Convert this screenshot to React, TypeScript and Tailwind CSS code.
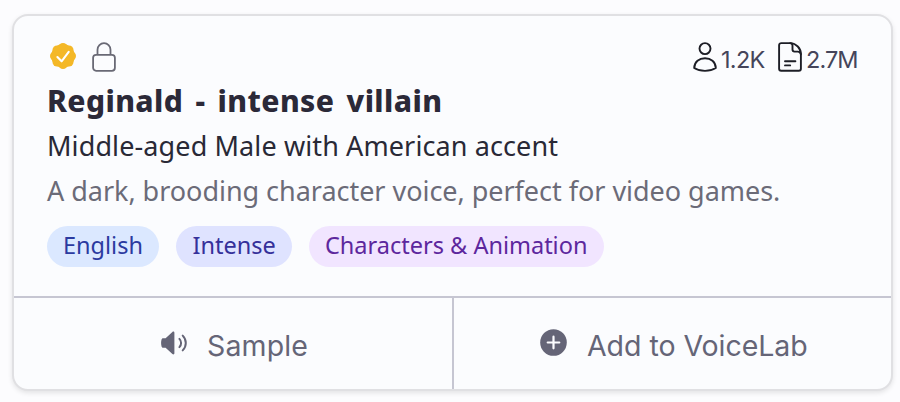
import React from "react";

function VerifiedIcon() {
  return (
    <svg className="h-[28px] w-[28px] shrink-0" viewBox="0 0 28 28" fill="none">
      <g fill="#f4b827">
        <circle cx="14" cy="14" r="11.8" />
        <circle cx="14" cy="5.6" r="4.6" />
        <circle cx="19.9" cy="8.1" r="4.6" />
        <circle cx="22.4" cy="14" r="4.6" />
        <circle cx="19.9" cy="19.9" r="4.6" />
        <circle cx="14" cy="22.4" r="4.6" />
        <circle cx="8.1" cy="19.9" r="4.6" />
        <circle cx="5.6" cy="14" r="4.6" />
        <circle cx="8.1" cy="8.1" r="4.6" />
      </g>
      <path d="M8.4 15.1 12.6 19.3 19.7 9.9" stroke="#fff" strokeWidth="2.1" strokeLinecap="round" strokeLinejoin="round" />
    </svg>
  );
}

function LockIcon() {
  return (
    <svg className="h-[30px] w-[24px] shrink-0" viewBox="0 0 24 30" fill="none" stroke="#696975" strokeWidth="1.8">
      <path d="M5.5 12.8V7.7a6.5 6.5 0 0 1 13 0v5.1" />
      <rect x="1.1" y="12.8" width="21.8" height="16" rx="3" />
    </svg>
  );
}

function UserIcon() {
  return (
    <svg className="h-[30px] w-[24px] shrink-0" viewBox="0 0 24 30" fill="none" stroke="#1d1e26" strokeWidth="1.9" strokeLinejoin="round">
      <circle cx="12" cy="6.6" r="5.5" />
      <path d="M1.2 26C1.4 19.8 6.2 16.2 12 16.2S22.6 19.8 22.8 26C19.6 28.1 16 28.9 12 28.9S4.4 28.1 1.2 26Z" />
    </svg>
  );
}

function DocumentIcon() {
  return (
    <svg className="h-[30px] w-[24px] shrink-0" viewBox="0 0 24 30" fill="none" stroke="#1d1e26" strokeWidth="1.9" strokeLinecap="round" strokeLinejoin="round">
      <path d="M12.2 1.1H3.2A2.1 2.1 0 0 0 1.1 3.2v23.5a2.1 2.1 0 0 0 2.1 2.1h17.6a2.1 2.1 0 0 0 2.1-2.1V12.2A11.1 11.1 0 0 0 12.2 1.1Z" />
      <path d="M12.2 1.1a2.5 2.5 0 0 1 2.3 2.5v4a2 2 0 0 0 2 2h3.2a3.2 3.2 0 0 1 3.2 2.6" />
      <path d="M7 19.2h10.4M7 23.4h5.2" />
    </svg>
  );
}

function SpeakerIcon() {
  return (
    <svg className="mt-[32px] h-[26px] w-[28px] shrink-0" viewBox="0 0 28 26" fill="none">
      <path d="M0.5 9.8C.8 8.7 1.4 8.3 2.4 8.3H4.6L11.4 2c.9-.8 2-.3 2 .8v20.4c0 1.1-1.1 1.6-2 .8L4.6 17.7H2.4c-1 0-1.6-.4-1.9-1.5a13 13 0 0 1 0-6.4Z" fill="#656577" />
      <path d="M18.4 8.9a5.8 5.8 0 0 1 0 8.2M21.7 5.6a10.4 10.4 0 0 1 0 14.8" stroke="#656577" strokeWidth="2" strokeLinecap="round" />
    </svg>
  );
}

function PlusIcon() {
  return (
    <svg className="mt-[31px] h-[27px] w-[27px] shrink-0" viewBox="0 0 27 27" fill="none">
      <circle cx="13.5" cy="13.5" r="13.3" fill="#656577" />
      <path d="M13.5 7.7v11.6M7.7 13.5h11.6" stroke="#fcfcff" strokeWidth="2.2" strokeLinecap="round" />
    </svg>
  );
}

export default function App() {
  return (
    <main className="h-[402px] w-[900px] overflow-hidden bg-[#fcfcfe] pl-[12px] pt-[14px] font-['Noto_Sans',sans-serif]">
      <article className="flex h-[377px] w-[881px] flex-col overflow-hidden rounded-[16px] border-2 border-[#e0e0e3] bg-[#fbfcfe] shadow-[0_2px_5px_rgba(0,0,0,0.1)]">
        <div className="flex h-[280px] shrink-0 flex-col px-[33px] pt-[26px]">
          <header className="flex h-[30px] justify-between">
            <div className="flex gap-[15px] pl-[2px]">
              <VerifiedIcon />
              <LockIcon />
            </div>
            <div className="flex font-['Inter',sans-serif] text-[23.5px] leading-[36px] text-[#45455a]">
              <UserIcon />
              <span className="ml-[4px] w-[57px] whitespace-nowrap tracking-[-0.7px]">1.2K</span>
              <DocumentIcon />
              <span className="ml-[4px] w-[52px] whitespace-nowrap tracking-[-0.9px]">2.7M</span>
            </div>
          </header>
          <h1 className="h-[44px] whitespace-nowrap text-[30px] font-extrabold leading-[57px] tracking-[0.4px] text-[#2b2938] [word-spacing:4px]">Reginald - intense villain</h1>
          <p className="h-[45px] whitespace-nowrap text-[27px] leading-[60px] tracking-[0.11px] text-[#292936]">Middle-aged Male with American accent</p>
          <p className="h-[45px] whitespace-nowrap text-[27px] leading-[60px] tracking-[-0.03px] text-[#6b6b78]">A dark, brooding character voice, perfect for video games.</p>
          <div className="mt-[20px] flex gap-[17px] text-[23.5px] leading-[38px]">
            <span className="h-[41px] w-[112px] whitespace-nowrap rounded-full bg-[#dbe8ff] pl-[16px] text-[#2b3aa0]">English</span>
            <span className="h-[41px] w-[116px] whitespace-nowrap rounded-full bg-[#dfe3ff] pl-[16.5px] text-[#35309a]">Intense</span>
            <span className="h-[41px] w-[295px] whitespace-nowrap rounded-full bg-[#f1e5ff] pl-[16px] text-[#5d279d]">Characters &amp; Animation</span>
          </div>
        </div>
        <footer className="flex h-[93px] shrink-0 border-t-2 border-[#c6c6d2] font-['Inter',sans-serif] text-[28.5px] leading-[96px] text-[#656577]">
          <button className="flex w-[440px] border-r-2 border-[#c6c6d2] pl-[147px] text-left">
            <SpeakerIcon />
            <span className="ml-[18px] whitespace-nowrap tracking-[0.15px]">Sample</span>
          </button>
          <button className="flex flex-1 pl-[86px] text-left">
            <PlusIcon />
            <span className="ml-[20px] whitespace-nowrap tracking-[-0.05px]">Add to VoiceLab</span>
          </button>
        </footer>
      </article>
    </main>
  );
}
